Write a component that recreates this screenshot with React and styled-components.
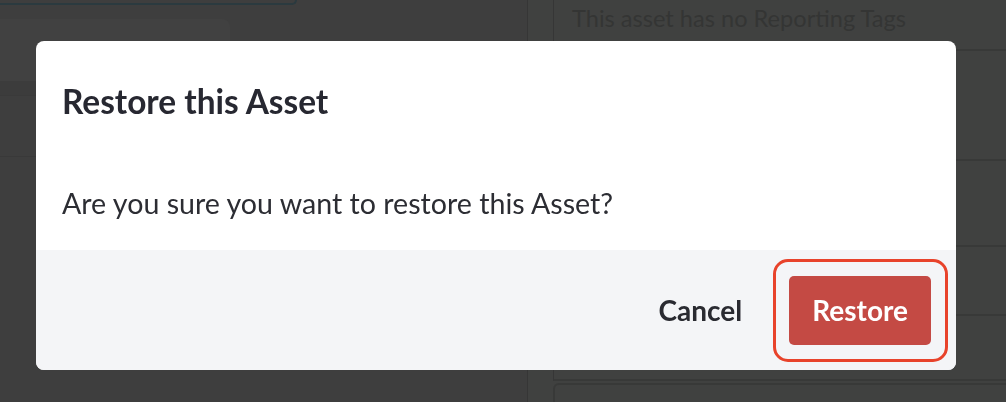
import React from "react";
import styled, { createGlobalStyle } from "styled-components";

const Global = createGlobalStyle`
  *, *::before, *::after { box-sizing: border-box; }
  html, body { margin: 0; padding: 0; }
  body {
    width: 1006px;
    height: 402px;
    overflow: hidden;
    background: #3e3e3e;
    font-family: Lato, "Open Sans", sans-serif;
  }
`;

const Page = styled.div`
  display: grid;
  grid-template-columns: 528px 1fr;
  width: 1006px;
  height: 402px;
`;

const Main = styled.div`
  display: flex;
  flex-direction: column;
  background: #3e3e3e;
  border-right: 1px solid #363636;
`;

const TopField = styled.div`
  width: 299px;
  height: 5px;
  border: 2px solid #2b3a3f;
  border-top: none;
  border-radius: 0 0 8px 0;
  margin-left: -2px;
`;

const Card = styled.div`
  margin-top: 14px;
  width: 230px;
  height: 62px;
  background: #414141;
  border-radius: 0 8px 0 0;
`;

const Band = styled.div`
  height: ${(p) => p.h}px;
  background: ${(p) => p.bg};
  border-bottom: 1px solid ${(p) => p.line};
`;

const Side = styled.div`
  display: flex;
  flex-direction: column;
  background: #404140;
  padding-left: 25px;
`;

const SideBox = styled.div`
  height: ${(p) => p.h}px;
  border-left: 1px solid #363636;
  border-bottom: 2px solid #383938;
  padding-left: 18px;
  color: #343534;
  font-size: 23.6px;
  line-height: 1;
  padding-top: ${(p) => p.pt || 0}px;
`;

const SideCard = styled.div`
  flex: 1;
  margin-top: 2px;
  border-left: 2px solid #383938;
  border-top: 2px solid #383938;
  border-radius: 6px 0 0 0;
`;

const Overlay = styled.div`
  position: fixed;
  inset: 0;
  display: flex;
  align-items: flex-start;
  justify-content: flex-start;
  padding: 41px 0 0 36px;
`;

const Dialog = styled.div`
  width: 920px;
  height: 329px;
  background: #ffffff;
  border-radius: 8px;
  overflow: hidden;
  display: flex;
  flex-direction: column;
`;

const Header = styled.h2`
  margin: 0;
  padding: 40px 26px 0;
  font-size: 33.4px;
  line-height: 40px;
  font-weight: 700;
  color: #272831;
`;

const Body = styled.p`
  margin: 0;
  padding: 65px 26px 30px;
  font-size: 28.6px;
  line-height: 34px;
  color: #2c2d33;
`;

const Footer = styled.div`
  flex: 1;
  background: #f4f5f7;
  display: flex;
  align-items: center;
  justify-content: flex-end;
  gap: 25px;
  padding-right: 25px;
`;

const Button = styled.button`
  position: relative;
  font-family: Lato, "Open Sans", sans-serif;
  font-weight: 700;
  font-size: 28px;
  border: none;
  cursor: pointer;
  height: 69px;
  padding: 0 ${(p) => (p.primary ? 23 : 22)}px;
  border-radius: 5px;
  background: ${(p) => (p.primary ? "#c44a44" : "transparent")};
  color: ${(p) => (p.primary ? "#ffffff" : "#2a2b31")};
  ${(p) =>
    p.highlight &&
    `
    &::after {
      content: "";
      position: absolute;
      top: -17px;
      bottom: -17px;
      left: -16px;
      right: -17px;
      border: 3px solid #e8432b;
      border-radius: 15px;
      pointer-events: none;
    }
  `}
`;

export default function App() {
  return (
    <>
      <Global />
      <Page>
        <Main>
          <TopField />
          <Card />
          <Band h={15} bg="#3c3c3c" line="#3a3a3a" />
          <Band h={61} bg="#3e3e3e" line="#393939" />
        </Main>
        <Side>
          <SideBox h={51} pt={7}>This asset has no Reporting Tags</SideBox>
          <SideBox h={110} />
          <SideBox h={86} />
          <SideBox h={69} />
          <SideBox h={65} />
          <SideCard />
        </Side>
      </Page>
      <Overlay>
        <Dialog role="dialog" aria-labelledby="restore-title">
          <Header id="restore-title">Restore this Asset</Header>
          <Body>Are you sure you want to restore this Asset?</Body>
          <Footer>
            <Button>Cancel</Button>
            <Button primary highlight>
              Restore
            </Button>
          </Footer>
        </Dialog>
      </Overlay>
    </>
  );
}
